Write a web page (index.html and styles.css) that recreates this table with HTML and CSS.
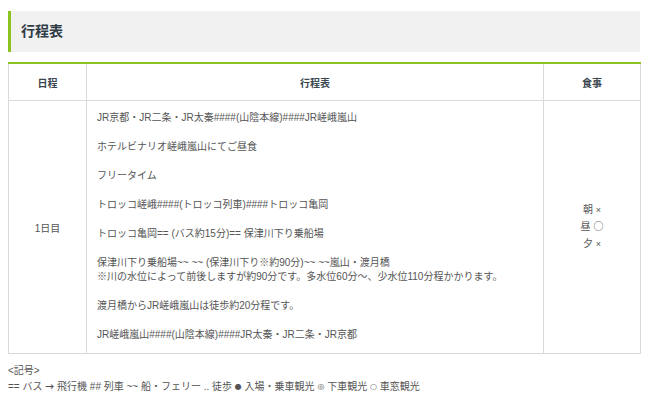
FILE: index.html
```html
<!DOCTYPE html>
<html lang="ja">
<head>
<meta charset="utf-8">
<link rel="stylesheet" href="styles.css">
</head>
<body>
<h2 class="heading">行程表</h2>
<table class="schedule">
  <colgroup>
    <col class="c-day">
    <col class="c-plan">
    <col class="c-meal">
  </colgroup>
  <thead>
    <tr><th>日程</th><th>行程表</th><th>食事</th></tr>
  </thead>
  <tbody>
    <tr>
      <td class="day">1日目</td>
      <td class="plan">
        <p>JR京都・JR二条・JR太秦####(山陰本線)####JR嵯峨嵐山</p>
        <p>ホテルビナリオ嵯峨嵐山にてご昼食</p>
        <p>フリータイム</p>
        <p>トロッコ嵯峨####(トロッコ列車)####トロッコ亀岡</p>
        <p>トロッコ亀岡== (バス約15分)== 保津川下り乗船場</p>
        <p>保津川下り乗船場~~ ~~ (保津川下り※約90分)~~ ~~嵐山・渡月橋<br>※川の水位によって前後しますが約90分です。多水位60分〜、少水位110分程かかります。</p>
        <p>渡月橋からJR嵯峨嵐山は徒歩約20分程です。</p>
        <p>JR嵯峨嵐山####(山陰本線)####JR太秦・JR二条・JR京都</p>
      </td>
      <td class="meal">
        <div>朝 <span class="x">×</span></div>
        <div>昼 <span class="o">○</span></div>
        <div>夕 <span class="x">×</span></div>
      </td>
    </tr>
  </tbody>
</table>
<div class="legend">
  <p>&lt;記号&gt;</p>
  <p>== バス <span class="arrow">→</span> 飛行機 ## 列車 ~~ 船・フェリー .. 徒歩 <span class="sym">●</span> 入場・乗車観光 <span class="sym">◎</span> 下車観光 <span class="sym">○</span> 車窓観光</p>
</div>
</body>
</html>
```
FILE: styles.css
```css
html, body {
  background: #fff;
}
body {
  margin: 0;
  padding: 11px 10px 0 8px;
  font-family: "Liberation Sans", "Noto Sans CJK JP", sans-serif;
  font-size: 10px;
  color: #555;
}
.heading {
  margin: 0;
  height: 41px;
  line-height: 41px;
  background: #f1f1f1;
  border-left: 3px solid #8cc320;
  padding-left: 10px;
  font-size: 14px;
  font-weight: bold;
  color: #2f3b45;
}
.schedule {
  margin-top: 10px;
  width: 632px;
  border-collapse: collapse;
  table-layout: fixed;
  border-top: 2px solid #8cc320;
}
.c-day { width: 78px; }
.c-plan { width: 457px; }
.c-meal { width: 97px; }
.schedule th,
.schedule td {
  border: 1px solid #d9d9d9;
}
.schedule thead th {
  border-top: none;
  height: 36px;
  padding: 0;
  font-weight: bold;
  font-size: 10px;
  color: #3a4650;
  text-align: center;
}
.day {
  text-align: center;
  vertical-align: middle;
}
.plan {
  padding: 10px 10px 11px 10px;
  line-height: 14px;
}
.plan p {
  margin: 0 0 15px;
}
.plan p:last-child {
  margin-bottom: 0;
}
.meal {
  text-align: center;
  vertical-align: middle;
  line-height: 16.5px;
}
.x {
  font-size: 9px;
}
.o {
  font-family: "Noto Sans CJK JP", sans-serif;
  font-size: 10px;
}
.legend {
  margin-top: 9px;
  line-height: 16px;
}
.legend p {
  margin: 0;
}
.arrow {
  font-family: "Noto Sans CJK JP", sans-serif;
  font-weight: bold;
  font-size: 9px;
}
.sym {
  font-family: "DejaVu Sans", sans-serif;
  font-weight: bold;
  font-size: 8px;
  vertical-align: 1px;
  color: #555;
}
```
